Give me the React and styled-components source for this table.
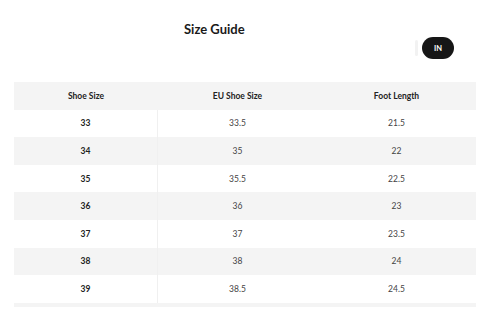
import styled, { createGlobalStyle } from "styled-components";

const GlobalStyle = createGlobalStyle`
  html, body {
    margin: 0;
    padding: 0;
    background: #fff;
  }
  body {
    font-family: "Lato", "Liberation Sans", sans-serif;
    color: #222;
  }
`;

const rows = [
  ["33", "33.5", "21.5"],
  ["34", "35", "22"],
  ["35", "35.5", "22.5"],
  ["36", "36", "23"],
  ["37", "37", "23.5"],
  ["38", "38", "24"],
  ["39", "38.5", "24.5"],
];

// Styled Components
const Page = styled.div`
  width: 480px;
  height: 322px;
  overflow: hidden;
  padding: 0 4px 0 14px;
  box-sizing: border-box;
`;

const Header = styled.div`
  height: 82px;
  display: flex;
  align-items: flex-start;
  justify-content: space-between;
`;

const Title = styled.h2`
  margin: 21px 0 0 170px;
  font-size: 13px;
  font-weight: 700;
  color: #1a1a1a;
`;

const Toggle = styled.div`
  margin: 37px 22px 0 0;
  display: flex;
  align-items: center;
  gap: 4px;
`;

const Hidden = styled.span`
  width: 3px;
  height: 16px;
  border-radius: 2px;
  background: #f2f2f2;
`;

const UnitButton = styled.button`
  width: 32px;
  height: 22px;
  border: none;
  border-radius: 11px;
  background: #161616;
  color: #fff;
  font-family: "Lato", "Liberation Sans", sans-serif;
  font-size: 7.5px;
  font-weight: 700;
  padding: 0;
`;

const Scroller = styled.div`
  height: 224.5px;
  overflow: hidden;
`;

const Table = styled.div`
  display: grid;
  grid-template-columns: 144px 159px 159px;
`;

const Cell = styled.div`
  height: 27.6px;
  display: flex;
  align-items: center;
  justify-content: center;
  font-size: 8.5px;
  font-weight: ${(p) => (p.$bold ? 700 : 400)};
  color: ${(p) => (p.$bold ? "#222" : "#444")};
  background: ${(p) => (p.$shade ? "#f4f4f4" : "#fff")};
  border-right: ${(p) => (p.$divider ? "1px solid #f0f0f0" : "none")};
  box-sizing: border-box;
`;

const Edge = styled.div`
  grid-column: 1 / -1;
  height: 5px;
  background: #f4f4f4;
`;

export default function App() {
  return (
    <>
      <GlobalStyle />
      <Page>
        <Header>
          <Title>Size Guide</Title>
          <Toggle>
            <Hidden />
            <UnitButton>IN</UnitButton>
          </Toggle>
        </Header>
        <Scroller>
          <Table>
            <Cell $shade $bold>Shoe Size</Cell>
            <Cell $shade $bold>EU Shoe Size</Cell>
            <Cell $shade $bold>Foot Length</Cell>
            {rows.map((r, i) => {
              const shade = i % 2 === 1;
              return [
                <Cell key={`a${i}`} $shade={shade} $bold $divider>{r[0]}</Cell>,
                <Cell key={`b${i}`} $shade={shade}>{r[1]}</Cell>,
                <Cell key={`c${i}`} $shade={shade}>{r[2]}</Cell>,
              ];
            })}
            <Edge />
          </Table>
        </Scroller>
      </Page>
    </>
  );
}
